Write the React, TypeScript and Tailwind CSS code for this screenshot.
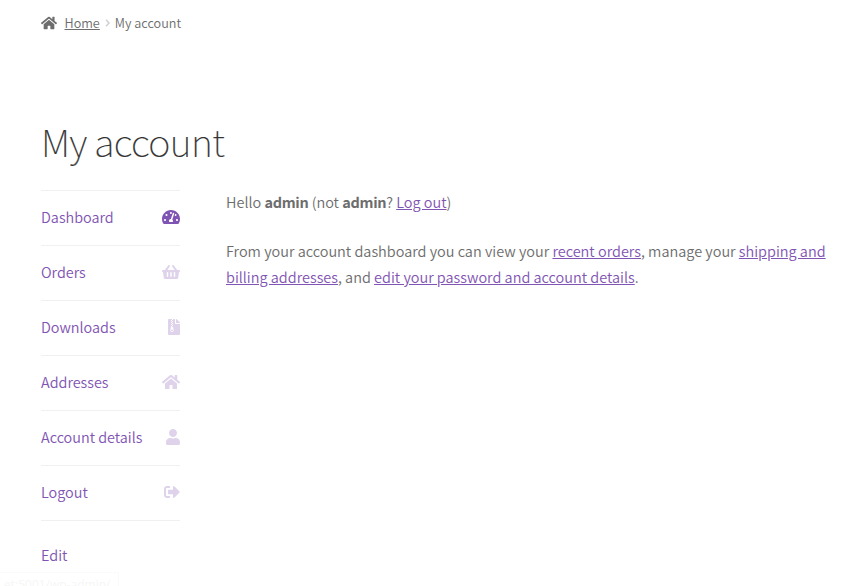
import React from 'react';
import { FaTachometerAlt, FaShoppingBasket, FaFileArchive, FaHome, FaUser, FaSignOutAlt } from 'react-icons/fa';
import type { IconType } from 'react-icons';

const items: { label: string; Icon: IconType; size: string }[] = [
  { label: 'Dashboard', Icon: FaTachometerAlt, size: 'w-[18px]' },
  { label: 'Orders', Icon: FaShoppingBasket, size: 'w-[18px] opacity-25' },
  { label: 'Downloads', Icon: FaFileArchive, size: 'w-3 opacity-25' },
  { label: 'Addresses', Icon: FaHome, size: 'w-[18px] opacity-25' },
  { label: 'Account details', Icon: FaUser, size: 'w-3.5 opacity-25' },
  { label: 'Logout', Icon: FaSignOutAlt, size: 'w-4 opacity-25' },
];

function Link({ children }: { children: React.ReactNode }) {
  return <a href="#" className="text-[#7f54b3] underline">{children}</a>;
}

function Strong({ children }: { children: React.ReactNode }) {
  return <strong className="tracking-[-0.3px]">{children}</strong>;
}

export default function App() {
  return (
    <div className="relative h-[586px] w-[850px] overflow-hidden bg-white pl-[41px] font-['Noto_Sans_CJK_SC',sans-serif] text-[14.48px] leading-[26px] font-[350] text-[#6d6d6d]">
      <nav className="flex h-[46px] items-center text-[12.65px]">
        <FaHome className="mr-[7.5px] size-4" />
        <a href="#" className="underline">Home</a>
        <svg viewBox="0 0 5 8" className="mx-[5px] h-2 w-[5px] fill-none stroke-[#d0d0d0] stroke-[1.5]"><path d="M1 .8 4 4 1 7.2" /></svg>
        <span>My account</span>
      </nav>
      <h1 className="mt-[70px] h-[50px] whitespace-nowrap text-[37.7px] font-thin leading-[50px] tracking-[-0.6px] text-[#333] [-webkit-text-stroke:0.2px_#333]">My account</h1>
      <div className="mt-[24px] flex gap-[46px]">
        <aside className="w-[139px] shrink-0 text-[#7f54b3]">
          <ul className="border-t border-[#f0f0f0] text-[14.42px]">
            {items.map(({ label, Icon, size }) => (
              <li key={label} className="flex h-[55px] items-center justify-between border-b border-[#f0f0f0] pb-0.5">
                <a href="#">{label}</a>
                <Icon className={`h-4 shrink-0 ${size}`} />
              </li>
            ))}
          </ul>
          <a href="#" className="mt-[21px] block">Edit</a>
        </aside>
        <main className="-mt-px w-[604px]">
          <p>Hello <Strong>admin</Strong> (not <Strong>admin</Strong>? <Link>Log out</Link>)</p>
          <p className="mt-[23px]">
            From your account dashboard you can view your <Link>recent orders</Link>, manage your <Link>shipping and billing addresses</Link>, and <Link>edit your password and account details</Link>.
          </p>
        </main>
      </div>
      <div className="absolute top-[572px] left-0 h-3.5 w-[119px] overflow-hidden border-t border-r border-[#fafafa] pt-[4px] pl-1 font-['Open_Sans',sans-serif] text-xs leading-4 font-normal whitespace-nowrap text-[#f6f6f6]">et:5001/wp-admin/</div>
    </div>
  );
}
